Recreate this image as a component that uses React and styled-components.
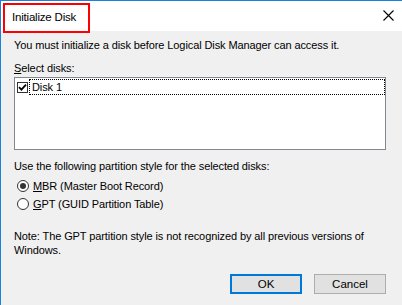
import React from 'react';
import styled, { createGlobalStyle } from 'styled-components';

const GlobalStyle = createGlobalStyle`
  html, body {
    margin: 0;
    padding: 0;
    background: #f0f0f0;
  }
  body {
    font-family: "Liberation Sans", Arial, sans-serif;
    font-size: 11px;
    letter-spacing: -0.1px;
    color: #000;
  }
`;

const App = () => {
  const [selected, setSelected] = React.useState('mbr');
  const [checked, setChecked] = React.useState(true);

  return (
    <>
      <GlobalStyle />
      <Window>
        <TitleBar>
          <Title>Initialize Disk</Title>
          <Highlight />
          <CloseButton aria-label="Close">
            <svg width="11" height="11" viewBox="0 0 11 11">
              <path d="M0.5 0.5 L10.5 10.5 M10.5 0.5 L0.5 10.5" stroke="#000" strokeWidth="1.1" fill="none" />
            </svg>
          </CloseButton>
        </TitleBar>
        <Body>
          <Line>You must initialize a disk before Logical Disk Manager can access it.</Line>
          <Line $top={9}><u>S</u>elect disks:</Line>
          <ListBox>
            <ListItem onClick={() => setChecked(!checked)}>
              <CheckBox>
                {checked && (
                  <svg width="9" height="9" viewBox="0 0 9 9">
                    <path d="M1 4.2 L3.4 6.6 L8 1.6" stroke="#000" strokeWidth="1.8" fill="none" />
                  </svg>
                )}
              </CheckBox>
              <FocusLabel>Disk 1</FocusLabel>
            </ListItem>
          </ListBox>
          <Line $top={9}>Use the following partition style for the selected disks:</Line>
          <RadioGroup>
            <RadioRow onClick={() => setSelected('mbr')}>
              <Radio $on={selected === 'mbr'} />
              <span><u>M</u>BR (Master Boot Record)</span>
            </RadioRow>
            <RadioRow onClick={() => setSelected('gpt')}>
              <Radio $on={selected === 'gpt'} />
              <span><u>G</u>PT (GUID Partition Table)</span>
            </RadioRow>
          </RadioGroup>
          <Note>
            Note: The GPT partition style is not recognized by all previous versions of
            <br />
            Windows.
          </Note>
          <Buttons>
            <Button $primary>OK</Button>
            <Button>Cancel</Button>
          </Buttons>
        </Body>
      </Window>
    </>
  );
};

export default App;

const Window = styled.div`
  display: flex;
  flex-direction: column;
  height: 305px;
  box-sizing: border-box;
  border-top: 1px solid #1883d7;
  border-left: 1px solid #1883d7;
  background: #f0f0f0;
  overflow: hidden;
`;

const TitleBar = styled.div`
  position: relative;
  display: flex;
  align-items: center;
  justify-content: space-between;
  height: 30px;
  flex-shrink: 0;
  background: #fff;
  padding-left: 11px;
`;

const Title = styled.div`
  font-size: 11.5px;
  letter-spacing: -0.2px;
  margin-top: 1px;
`;

const Highlight = styled.div`
  position: absolute;
  left: 2px;
  top: 2px;
  width: 87px;
  height: 30px;
  box-sizing: border-box;
  border: 2px solid #ff0000;
  z-index: 2;
  pointer-events: none;
`;

const CloseButton = styled.div`
  display: flex;
  align-items: center;
  justify-content: center;
  width: 46px;
  height: 30px;
  margin-right: -9px;
  margin-top: -1px;
`;

const Body = styled.div`
  display: flex;
  flex-direction: column;
  padding: 7px 16px 0 13px;
`;

const Line = styled.div`
  line-height: 14px;
  margin-top: ${p => p.$top || 0}px;
  white-space: nowrap;
`;

const ListBox = styled.div`
  margin-top: 2px;
  height: 73px;
  flex-shrink: 0;
  box-sizing: border-box;
  border: 1px solid #828790;
  background: #fff;
  padding: 0 0 0 1px;
`;

const ListItem = styled.div`
  display: flex;
  align-items: center;
  height: 17px;
  cursor: default;
`;

const CheckBox = styled.div`
  display: flex;
  align-items: center;
  justify-content: center;
  width: 11px;
  height: 11px;
  box-sizing: border-box;
  border: 1px solid #333;
  background: #fff;
  margin: 2px 1px 0 1px;
`;

const FocusLabel = styled.div`
  flex: 1;
  height: 16px;
  line-height: 15px;
  box-sizing: border-box;
  border: 1px dotted #000;
  padding-left: 2px;
`;

const RadioGroup = styled.div`
  display: flex;
  flex-direction: column;
  margin-top: 4px;
`;

const RadioRow = styled.label`
  display: flex;
  align-items: center;
  gap: 4px;
  height: 18px;
  line-height: 14px;
  padding-left: 3px;
  cursor: default;
`;

const Radio = styled.span`
  position: relative;
  flex-shrink: 0;
  width: 12px;
  height: 12px;
  box-sizing: border-box;
  border-radius: 50%;
  border: 1px solid #333;
  background: #fff;
  &::after {
    content: '';
    display: ${p => (p.$on ? 'block' : 'none')};
    position: absolute;
    left: 2px;
    top: 2px;
    width: 6px;
    height: 6px;
    border-radius: 50%;
    background: #333;
  }
`;

const Note = styled.div`
  margin-top: 16px;
  line-height: 14px;
  white-space: nowrap;
`;

const Buttons = styled.div`
  display: flex;
  justify-content: flex-end;
  gap: 12px;
  margin-top: 17px;
`;

const Button = styled.button`
  width: 72px;
  height: 20px;
  box-sizing: border-box;
  padding: 0;
  font-family: "Liberation Sans", Arial, sans-serif;
  font-size: 11.5px;
  color: #000;
  background: #e1e1e1;
  border: ${p => (p.$primary ? '2px solid #0078d7' : '1px solid #adadad')};
  border-radius: 0;
`;
